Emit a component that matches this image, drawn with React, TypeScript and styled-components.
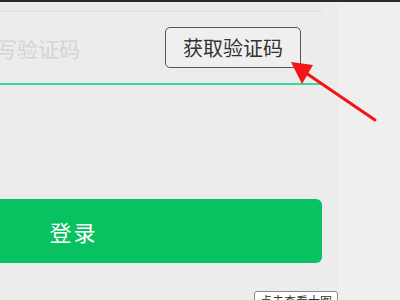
import React from 'react';
import styled, { createGlobalStyle } from 'styled-components';

const GlobalStyle = createGlobalStyle`
  html, body {
    margin: 0;
    padding: 0;
    width: 400px;
    height: 300px;
    overflow: hidden;
    background: #efefef;
    font-family: "Noto Sans CJK SC", "Noto Sans", sans-serif;
  }
`;

// whole window
const Page = styled.div`
  position: relative;
  width: 400px;
  height: 300px;
  display: flex;
  flex-direction: column;
  overflow: hidden;
`;

const TopEdge = styled.div`
  height: 2px;
  background: #2b2b2b;
  flex-shrink: 0;
`;

const Body = styled.div`
  flex: 1;
  display: flex;
`;

// left column holding the (cropped) login form
const Main = styled.div`
  width: 338px;
  background: #ececec;
  overflow: hidden;
`;

const Side = styled.div`
  flex: 1;
  background: #efefef;
`;

const Form = styled.div`
  width: 497px;
  margin-left: -175px;
  display: flex;
  flex-direction: column;
`;

const Divider = styled.div`
  margin-top: 8px;
  height: 2px;
  background: #e2e2e2;
`;

const InputRow = styled.div`
  height: 71px;
  display: flex;
  align-items: center;
  justify-content: space-between;
  padding: 0 21px 0 150px;
  border-bottom: 2px solid #3dd897;
`;

const CodeInput = styled.input`
  flex: 1;
  min-width: 0;
  border: none;
  outline: none;
  background: transparent;
  padding: 0;
  font-family: inherit;
  font-size: 21px;
  color: #333;
  &::placeholder {
    color: #d4d4d4;
  }
`;

const CodeButton = styled.button`
  width: 136px;
  height: 41px;
  border: 1px solid #555;
  border-radius: 5px;
  background: #efefef;
  color: #333;
  font-family: inherit;
  font-size: 20px;
  padding: 0;
  display: flex;
  align-items: center;
  justify-content: center;
`;

const LoginButton = styled.button`
  margin-top: 114px;
  height: 64px;
  border: none;
  border-radius: 6px;
  background: #08c161;
  color: #fff;
  font-family: inherit;
  font-size: 22px;
  letter-spacing: 2px;
  display: flex;
  align-items: center;
  justify-content: center;
`;

// "click to enlarge" tooltip peeking at the bottom edge
const Tip = styled.div`
  position: absolute;
  left: 254px;
  top: 291px;
  width: 84px;
  box-sizing: border-box;
  padding: 1px 0;
  text-align: center;
  background: #fff;
  border: 1px solid #8a8a8a;
  border-radius: 3px;
  font-size: 12px;
  line-height: 16px;
  color: #333;
  white-space: nowrap;
`;

const Arrow = styled.svg`
  position: absolute;
  left: 0;
  top: 0;
  pointer-events: none;
`;

export default function App() {
  return (
    <>
      <GlobalStyle />
      <Page>
        <TopEdge />
        <Body>
          <Main>
            <Form>
              <Divider />
              <InputRow>
                <CodeInput placeholder="填写验证码" />
                <CodeButton type="button">获取验证码</CodeButton>
              </InputRow>
              <LoginButton type="button">登录</LoginButton>
            </Form>
          </Main>
          <Side />
        </Body>
        <Tip>点击查看大图</Tip>
        <Arrow width="400" height="300" viewBox="0 0 400 300">
          <line x1="375" y1="120" x2="303" y2="71" stroke="#f21515" strokeWidth="3" strokeLinecap="round" />
          <polygon points="291,62 313,65 302,84" fill="#f21515" />
        </Arrow>
      </Page>
    </>
  );
}
